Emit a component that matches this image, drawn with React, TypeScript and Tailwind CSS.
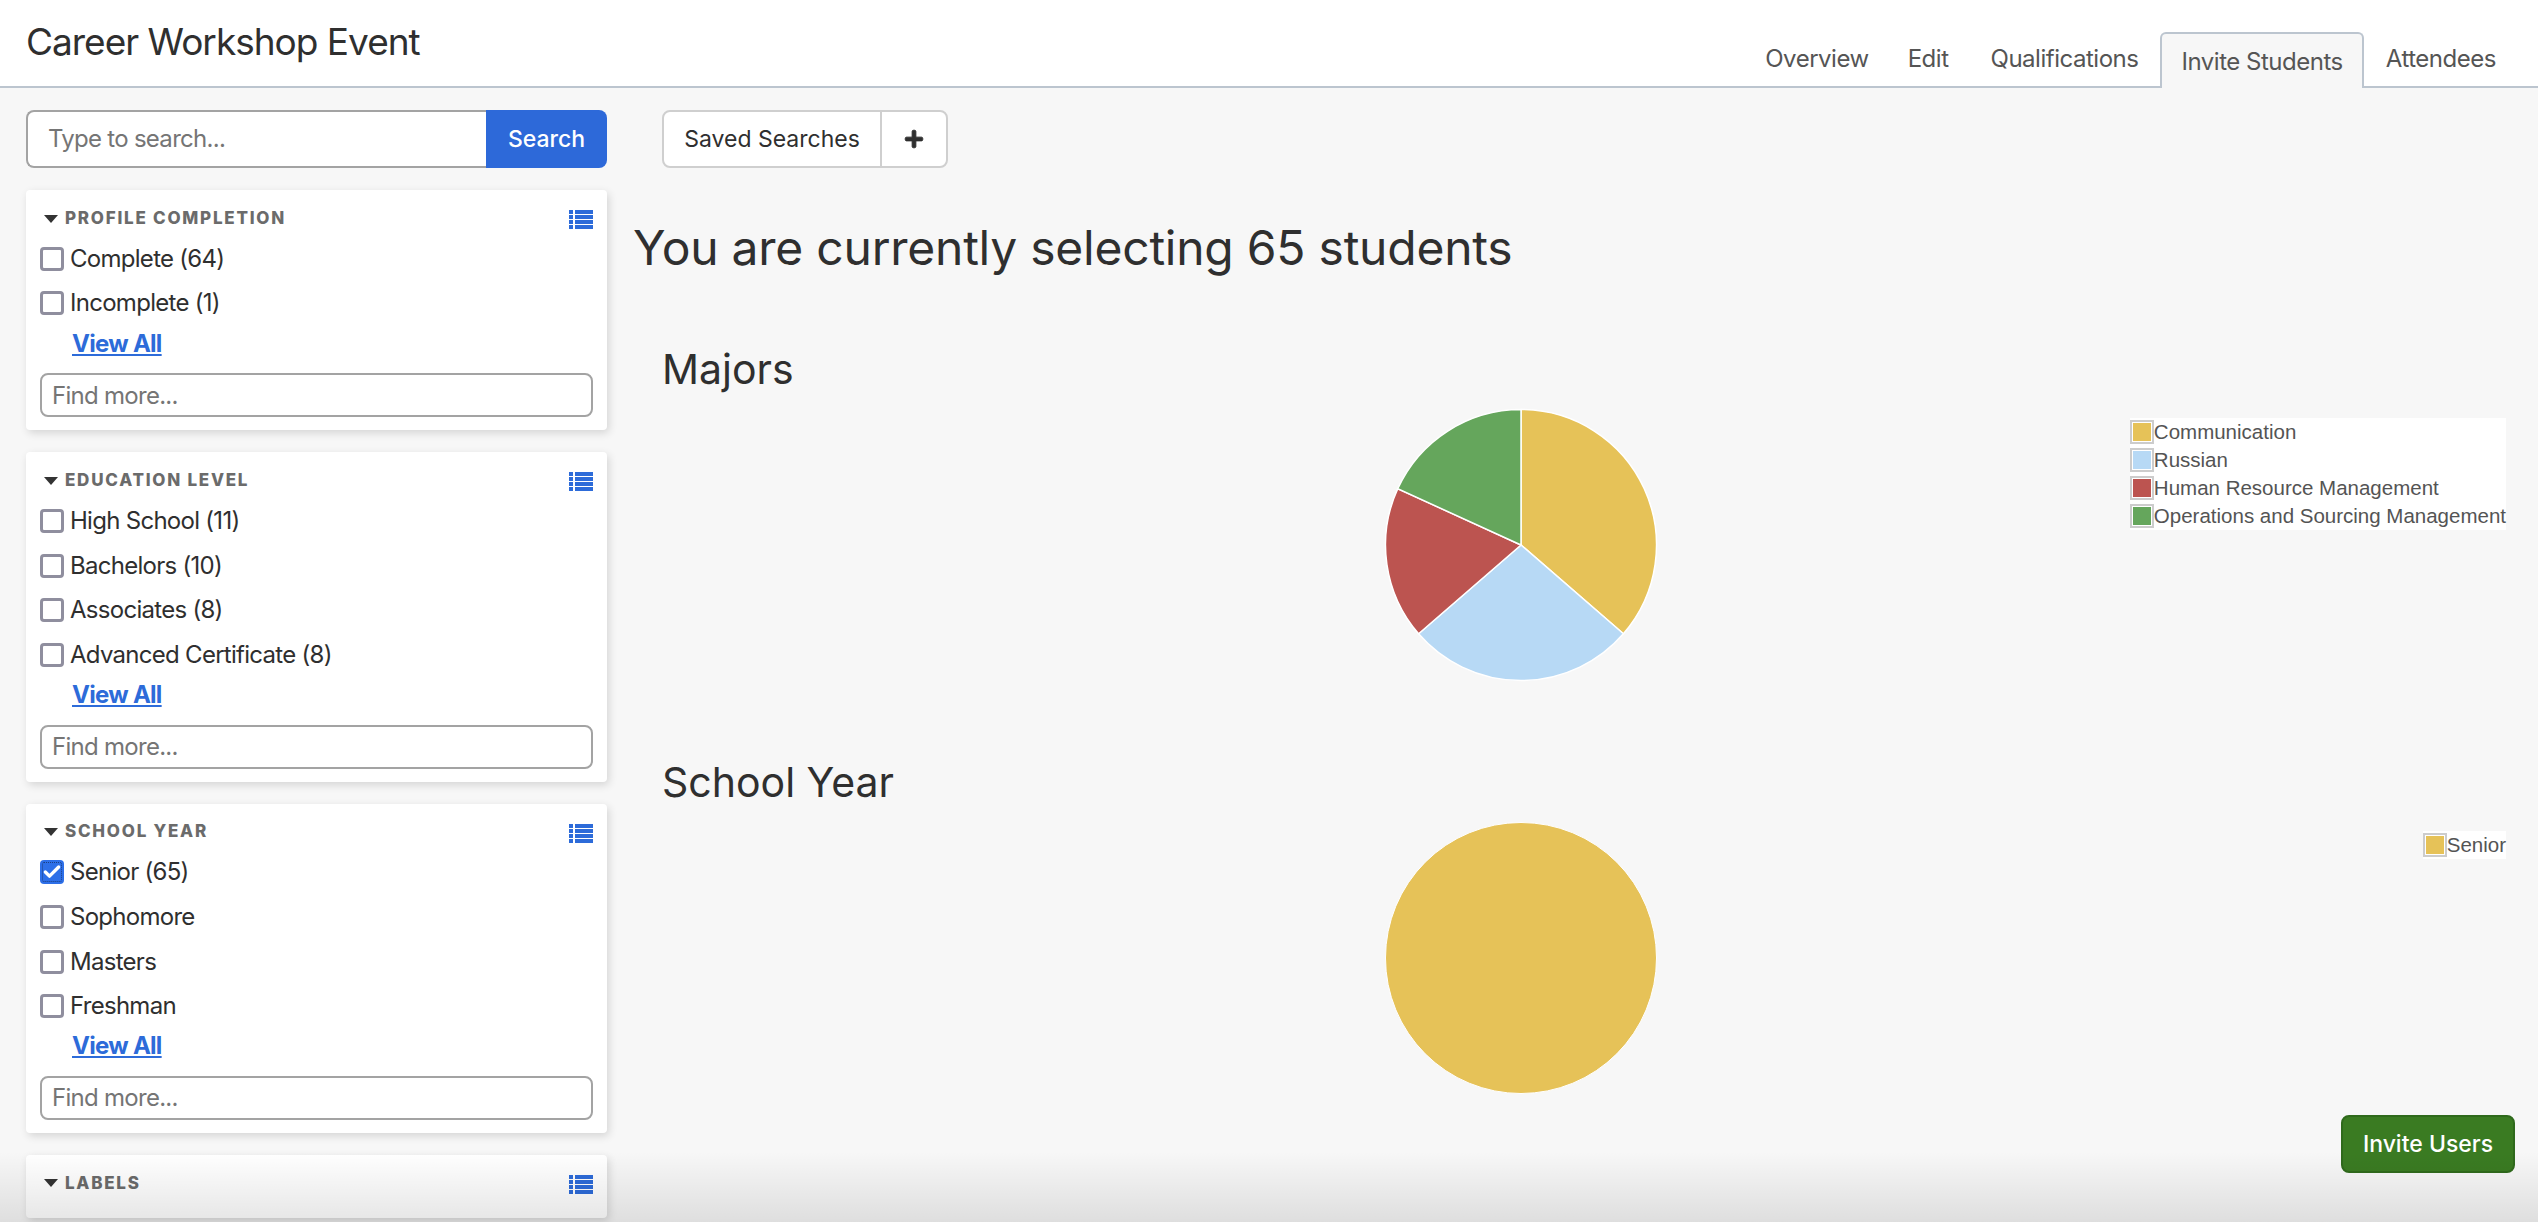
import { Check } from 'lucide-react';
import { FaPlus } from 'react-icons/fa';

const tabs = ['Overview', 'Edit', 'Qualifications', 'Invite Students', 'Attendees'];

const filters = [
  { title: 'PROFILE COMPLETION', options: ['Complete (64)', 'Incomplete (1)'] },
  { title: 'EDUCATION LEVEL', options: ['High School (11)', 'Bachelors (10)', 'Associates (8)', 'Advanced Certificate (8)'] },
  { title: 'SCHOOL YEAR', options: ['Senior (65)', 'Sophomore', 'Masters', 'Freshman'] },
];

const majors = [
  { label: 'Communication', value: 4, color: '#e6c258', swatch: 'bg-[#e6c258]' },
  { label: 'Russian', value: 3, color: '#b7d9f5', swatch: 'bg-[#b7d9f5]' },
  { label: 'Human Resource Management', value: 2, color: '#bc5450', swatch: 'bg-[#bc5450]' },
  { label: 'Operations and Sourcing Management', value: 2, color: '#65a65c', swatch: 'bg-[#65a65c]' },
];

const years = [{ label: 'Senior', value: 1, color: '#e6c258', swatch: 'bg-[#e6c258]' }];

type Slice = { label: string; value: number; color: string; swatch: string };

function ListIcon() {
  return (
    <svg width="24" height="20" viewBox="0 0 24 20" fill="#2d6bd9">
      {[0, 5, 10, 15].map((y) => (
        <g key={y}>
          <rect x="0" y={y} width="4" height="4" />
          <rect x="6" y={y} width="18" height="4" />
        </g>
      ))}
    </svg>
  );
}

function CardTitle({ title }: { title: string }) {
  return (
    <div className="flex items-center pl-[4px] h-[17px]">
      <svg width="14" height="8" viewBox="0 0 14 8" className="mr-[7px]">
        <polygon points="0,0 14,0 7,8" fill="#333333" />
      </svg>
      <span className="text-[17px] font-extrabold tracking-[0.103em] text-[#6b6b6b]">{title}</span>
    </div>
  );
}

function Pie({ slices }: { slices: Slice[] }) {
  const r = 135.5;
  const c = 137;
  const total = slices.reduce((sum, s) => sum + s.value, 0);
  let acc = 0;
  return (
    <svg width="274" height="274" viewBox="0 0 274 274">
      {slices.length === 1 ? (
        <circle cx={c} cy={c} r={r} fill={slices[0].color} stroke="#ffffff" strokeWidth="1" />
      ) : (
        slices.map((s) => {
          const a0 = (acc / total) * 2 * Math.PI;
          acc += s.value;
          const a1 = (acc / total) * 2 * Math.PI;
          const large = a1 - a0 > Math.PI ? 1 : 0;
          const d = `M${c} ${c}L${c + r * Math.sin(a0)} ${c - r * Math.cos(a0)}A${r} ${r} 0 ${large} 1 ${c + r * Math.sin(a1)} ${c - r * Math.cos(a1)}Z`;
          return <path key={s.label} d={d} fill={s.color} stroke="#ffffff" strokeWidth="1.5" />;
        })
      )}
    </svg>
  );
}

function Chart({ title, slices }: { title: string; slices: Slice[] }) {
  return (
    <section className="h-[412.5px]">
      <h2 className="h-[64px] text-[41px] leading-[50px] text-[#2f2f2f]">{title}</h2>
      <div className="relative flex justify-center pr-[127px]">
        <Pie slices={slices} />
        <div className="absolute right-0 top-[10px] bg-white text-[20.5px] leading-[28px] text-[#545454] font-['Liberation_Sans',sans-serif]">
          {slices.map((s) => (
            <div key={s.label} className="flex items-center h-[28px] whitespace-nowrap">
              <span className="border-2 border-[#cccccc] p-[1px] w-[24px] h-[24px]">
                <span className={`block w-[18px] h-[18px] ${s.swatch}`} />
              </span>
              {s.label}
            </div>
          ))}
        </div>
      </div>
    </section>
  );
}

function FilterCard({ title, options }: { title: string; options: string[] }) {
  return (
    <div className="bg-white rounded-[4px] shadow-[2px_3px_8px_rgba(0,0,0,0.14)] px-[14px] pt-[20px] pb-[13px] mb-[22px]">
      <div className="flex items-start justify-between h-[26.5px]">
        <CardTitle title={title} />
        <ListIcon />
      </div>
      {options.map((option) => {
        const checked = option.startsWith('Senior');
        return (
          <label key={option} className="flex items-center h-[44.6px] text-[24px] tracking-[-0.03em] text-[#2f2f2f]">
            {checked ? (
              <span className="w-[24px] h-[24px] rounded-[4px] bg-[#2d6fe8] flex items-center justify-center mr-[6px] outline-1 outline-dotted outline-offset-[-3px] outline-[#1c3f80]">
                <Check className="w-[20px] h-[20px] text-white" strokeWidth={4} />
              </span>
            ) : (
              <span className="w-[24px] h-[24px] rounded-[4px] border-[3px] border-[#8f8e9e] bg-white mr-[6px]" />
            )}
            {option}
          </label>
        );
      })}
      <a className="block ml-[32px] h-[47.5px] text-[24px] tracking-[-0.03em] leading-[36px] font-bold text-[#2d6bd9] underline">View All</a>
      <input
        placeholder="Find more..."
        className="block w-full h-[44px] border-2 border-[#a3a3a3] rounded-[8px] px-[10px] text-[24px] tracking-[-0.03em] bg-white placeholder:text-[#757575] outline-none"
      />
    </div>
  );
}

export default function App() {
  return (
    <div className="relative h-[1222px] overflow-hidden bg-[#f7f7f7] font-['Inter',sans-serif] text-[#2f2f2f]">
      <header className="h-[88px] bg-white border-b-2 border-[#bcc5cf] flex justify-between pl-[26px] pr-[22px]">
        <h1 className="text-[37px] tracking-[-0.027em] leading-[84px]">Career Workshop Event</h1>
        <nav className="flex items-end h-[88px] gap-[2px]">
          {tabs.map((tab) =>
            tab === 'Invite Students' ? (
              <div key={tab} className="h-[56px] px-[19px] pt-[10px] text-[24px] tracking-[-0.02em] leading-[36px] text-[#555555] bg-[#f7f7f7] border-2 border-b-0 border-[#bcc5cf] rounded-t-[6px] relative z-10">
                {tab}
              </div>
            ) : (
              <div key={tab} className={`h-[56px] px-[20px] pt-[9px] text-[24px] tracking-[-0.02em] leading-[36px] text-[#555555] ${tab === 'Overview' ? '-mr-[3px]' : ''}`}>
                {tab}
              </div>
            ),
          )}
        </nav>
      </header>
      <main className="flex">
        <aside className="w-[607px] shrink-0 pl-[26px] pt-[22px]">
          <div className="flex h-[58px] mb-[22px]">
            <input
              placeholder="Type to search..."
              className="w-[460px] border-2 border-r-0 border-[#a3a3a3] rounded-l-[8px] px-[20px] text-[24px] tracking-[-0.03em] bg-white placeholder:text-[#757575] outline-none"
            />
            <button className="w-[121px] bg-[#2d69d9] rounded-r-[8px] text-white text-[23px] font-medium">Search</button>
          </div>
          {filters.map((f) => (
            <FilterCard key={f.title} title={f.title} options={f.options} />
          ))}
          <div className="bg-white rounded-[4px] shadow-[2px_3px_8px_rgba(0,0,0,0.14)] px-[14px] pt-[20px] h-[63px]">
            <div className="flex items-start justify-between">
              <CardTitle title="LABELS" />
              <ListIcon />
            </div>
          </div>
        </aside>
        <div className="flex-1 pl-[26px] pt-[22px]">
          <div className="ml-[29px] inline-flex h-[58px] border-2 border-[#cfcfcf] rounded-[8px] bg-white text-[23px] text-[#2f2f2f]">
            <div className="w-[218px] flex items-center justify-center border-r-2 border-[#cfcfcf]">Saved Searches</div>
            <div className="w-[64px] flex items-center justify-center">
              <FaPlus className="w-[20px] h-[20px]" stroke="currentColor" strokeWidth={24} />
            </div>
          </div>
          <h1 className="mt-[49px] text-[48px] tracking-[-0.005em] leading-[62px] text-[#2f2f2f]">You are currently selecting 65 students</h1>
          <div className="mt-[65px] ml-[29px] mr-[32px]">
            <Chart title="Majors" slices={majors} />
            <Chart title="School Year" slices={years} />
          </div>
        </div>
      </main>
      <button className="absolute left-[2341px] top-[1115px] w-[174px] h-[58px] bg-[#3a7b22] border-2 border-[#2f6a1c] rounded-[8px] text-white text-[23px] font-medium">
        Invite Users
      </button>
      <div className="absolute inset-x-0 bottom-0 h-[70px] bg-gradient-to-b from-black/0 to-black/10 pointer-events-none" />
    </div>
  );
}
